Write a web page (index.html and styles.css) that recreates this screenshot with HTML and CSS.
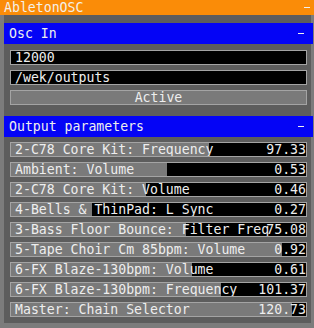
FILE: index.html
```html
<!DOCTYPE html>
<html>
<head>
<meta charset="utf-8">
<link rel="stylesheet" href="styles.css">
</head>
<body>
<div class="titlebar"><span class="title">AbletonOSC</span><span class="minus"></span></div>
<div class="panel">
  <div class="group osc">
    <div class="header"><span>Osc In</span><span class="minus"></span></div>
    <div class="rows">
      <div class="field"><span class="label">12000</span></div>
      <div class="field"><span class="label">/wek/outputs</span></div>
      <div class="field button"><span class="center">Active</span></div>
    </div>
  </div>
  <div class="group out">
    <div class="header"><span>Output parameters</span><span class="minus"></span></div>
    <div class="rows">
      <div class="field slider" style="--w:198px"><span class="label">2-C78 Core Kit: Frequency</span><span class="value">97.33</span></div>
      <div class="field slider" style="--w:156px"><span class="label">Ambient: Volume</span><span class="value">0.53</span></div>
      <div class="field slider" style="--w:135px"><span class="label">2-C78 Core Kit: Volume</span><span class="value">0.46</span></div>
      <div class="field slider" style="--w:81px"><span class="label">4-Bells &amp; ThinPad: L Sync</span><span class="value">0.27</span></div>
      <div class="field slider" style="--w:175px"><span class="label">3-Bass Floor Bounce: Filter Freq</span><span class="value">75.08</span></div>
      <div class="field slider" style="--w:271px"><span class="label">5-Tape Choir Cm 85bpm: Volume</span><span class="value">0.92</span></div>
      <div class="field slider" style="--w:181px"><span class="label">6-FX Blaze-130bpm: Volume</span><span class="value">0.61</span></div>
      <div class="field slider" style="--w:210px"><span class="label">6-FX Blaze-130bpm: Frequency</span><span class="value">101.37</span></div>
      <div class="field slider" style="--w:281px"><span class="label">Master: Chain Selector</span><span class="value">120.73</span></div>
    </div>
  </div>
</div>
</body>
</html>
```

FILE: styles.css
```css
html, body {
  margin: 0;
  padding: 0;
}
body {
  width: 314px;
  height: 328px;
  overflow: hidden;
  background: #7c7c7c;
  font-family: "DejaVu Sans Mono", "Liberation Mono", monospace;
  font-size: 13.2px;
  color: #eeeeee;
}
.titlebar {
  height: 15px;
  background: #fa8c08;
  display: flex;
  align-items: center;
  justify-content: space-between;
  padding: 0 4px;
  line-height: 15px;
}
.title {
  color: #f4f0e8;
}
.minus {
  display: block;
  width: 6px;
  height: 1px;
  background: #f0f0f0;
}
.panel {
  margin-left: 4px;
  width: 307px;
  background: #5d5d5d;
  padding: 8px 0 6px 0;
  display: flex;
  flex-direction: column;
  gap: 11px;
}
.header {
  height: 21px;
  margin-right: -2px;
  background: #0404f6;
  display: flex;
  align-items: center;
  justify-content: space-between;
  padding: 0 9px 0 5px;
  line-height: 21px;
}
.rows {
  display: flex;
  flex-direction: column;
  gap: 5px;
  padding: 6px 0 0 6px;
}
.out .rows {
  padding-top: 5px;
}
.field {
  box-sizing: border-box;
  width: 297px;
  height: 15px;
  border: 1px solid #a4a4a4;
  background: #000;
  display: grid;
  align-items: center;
  padding: 0 0 0 4px;
  line-height: 13px;
  white-space: nowrap;
  overflow: hidden;
}
.field > span {
  grid-area: 1 / 1;
}
.slider {
  background: linear-gradient(to right, #7a7a7a var(--w), #000 var(--w));
}
.value {
  justify-self: end;
}
.button {
  background: #7a7a7a;
  padding: 0;
}
.center {
  justify-self: center;
}
```
